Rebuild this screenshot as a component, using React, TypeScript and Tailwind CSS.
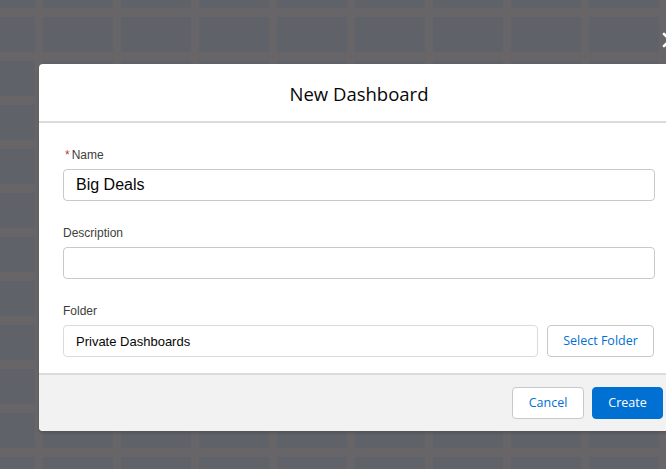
import { useState } from "react";

const tiles = Array.from({ length: 120 }, (_, i) => i);

function Field({
  label,
  required,
  children,
}: {
  label: string;
  required?: boolean;
  children: React.ReactNode;
}) {
  return (
    <div className="flex flex-col">
      <label className="mb-1 flex h-5 items-center text-xs leading-5 text-[#3e3e3c]">
        {required && <abbr className="mr-0.5 ml-[2px] text-[#c23934] no-underline">*</abbr>}
        {label}
      </label>
      {children}
    </div>
  );
}

export default function App() {
  const [name, setName] = useState("Big Deals");
  const [description, setDescription] = useState("");

  return (
    <div className="relative h-[469px] w-[666px] overflow-hidden bg-[#676567] font-['Liberation_Sans',Arial,sans-serif]">
      {/* dashboard tiles behind the backdrop */}
      <div className="-mt-[27px] -ml-[35px] grid grid-cols-[repeat(10,70px)] auto-rows-[35px] gap-x-2 gap-y-[9px]">
        {tiles.map((t) => (
          <div key={t} className="bg-[#5f6369]" />
        ))}
      </div>

      <div className="absolute top-[64px] left-[39px] w-[640px]">
        <button
          aria-label="Close"
          className="absolute -top-8 right-px flex h-4 w-4 items-center justify-center text-white"
        >
          <svg viewBox="0 0 16 16" className="h-4 w-4" fill="none" stroke="currentColor" strokeWidth="2.6" strokeLinecap="round">
            <path d="M2 2l12 12M14 2L2 14" />
          </svg>
        </button>

        <div className="rounded bg-white shadow-[0_2px_3px_rgba(0,0,0,0.16)]">
          <header className="flex h-[59px] items-center justify-center border-b-2 border-[#dddbda] pt-px">
            <h2 className="font-['Open_Sans',sans-serif] text-[18.5px] leading-[25px] text-[#080707]">
              New Dashboard
            </h2>
          </header>

          <div className="flex flex-col gap-[22px] px-6 pt-[22px] pb-4">
            <Field label="Name" required>
              <input
                value={name}
                onChange={(e) => setName(e.target.value)}
                className="h-8 w-full rounded border border-[#c9c9c9] bg-white px-3 text-base text-[#080707] outline-none"
              />
            </Field>
            <Field label="Description">
              <input
                value={description}
                onChange={(e) => setDescription(e.target.value)}
                className="h-8 w-full rounded border border-[#c9c9c9] bg-white px-3 text-[13px] text-[#080707] outline-none"
              />
            </Field>
            <Field label="Folder">
              <div className="flex gap-[9px]">
                <input
                  readOnly
                  value="Private Dashboards"
                  className="h-8 min-w-0 flex-1 rounded border border-[#dddbda] bg-white px-3 text-[13px] text-[#080707] outline-none"
                />
                <button className="mr-px h-8 w-[107px] rounded border border-[#c9c9c9] bg-white font-['Open_Sans',sans-serif] text-[12.5px] text-[#0070d2]">
                  Select Folder
                </button>
              </div>
            </Field>
          </div>

          <footer className="flex justify-end gap-2 rounded-b border-t-2 border-[#dddbda] bg-[#f3f2f2] px-4 py-3">
            <button className="h-8 w-[72px] rounded border border-[#c9c9c9] bg-white font-['Open_Sans',sans-serif] text-[12.5px] text-[#0070d2]">
              Cancel
            </button>
            <button className="h-8 w-[71px] rounded border border-[#0070d2] bg-[#0070d2] font-['Open_Sans',sans-serif] text-[12.5px] text-white">
              Create
            </button>
          </footer>
        </div>
      </div>
    </div>
  );
}
